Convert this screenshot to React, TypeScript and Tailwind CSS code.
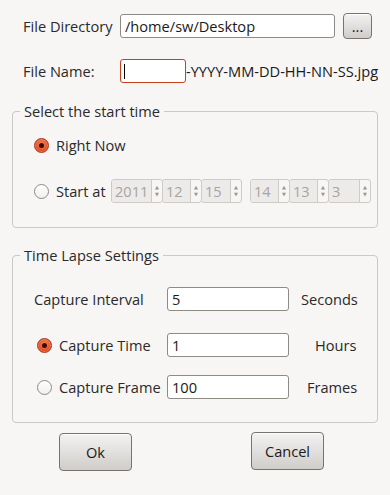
import React from 'react';

const FONT = { fontFamily: '"Open Sans", "Noto Sans", "DejaVu Sans", sans-serif' };

function Radio({ checked }: { checked?: boolean }) {
  if (checked) {
    return (
      <span className="flex h-[15px] w-[15px] shrink-0 items-center justify-center rounded-full border border-[#a5331a] bg-[radial-gradient(circle_at_50%_40%,#f58a5c,#e2461a_70%)] shadow-[inset_0_0_0_1px_rgba(255,255,255,0.25)]">
        <span className="h-[5px] w-[5px] rounded-full bg-[#3a0c02]" />
      </span>
    );
  }
  return (
    <span className="h-[15px] w-[15px] shrink-0 rounded-full border border-[#8e8a86] bg-gradient-to-b from-white to-[#f1efed]" />
  );
}

function Spin({ value, w }: { value: string; w: string }) {
  return (
    <div className={`flex h-[24px] ${w} rounded-[3px] border border-[#cfcbc7] bg-[#f7f6f5]`}>
      <div className="flex flex-1 items-center rounded-l-[3px] border-r border-[#cfcbc7] bg-[#edebe9] pl-[3px] text-[#a8a4a0]">
        {value}
      </div>
      <div className="flex w-[10px] flex-col items-center justify-center text-[5px] leading-[7px] text-[#9b9793]">
        <span>▲</span>
        <span>▼</span>
      </div>
    </div>
  );
}

function TextBox({ value, w, red }: { value?: string; w: string; red?: boolean }) {
  return (
    <div
      className={`flex h-[24px] ${w} items-center rounded-[3px] border bg-white pl-[4px] text-[#1a1a1a] ${
        red ? 'border-[#c8401e]' : 'border-[#8e8a86]'
      }`}
    >
      {value}
      {red && <span className="ml-[-1px] h-[15px] w-px bg-black" />}
    </div>
  );
}

function GrayButton({ label, w, h }: { label: string; w: string; h: string }) {
  return (
    <button
      className={`flex ${w} ${h} items-center justify-center rounded-[4px] border border-[#77736f] bg-gradient-to-b from-[#f3f2f1] via-[#e2e0de] to-[#cfccc9] text-[#1a1a1a] shadow-[inset_0_1px_0_rgba(255,255,255,0.8)]`}
    >
      {label}
    </button>
  );
}

export default function App() {
  return (
    <div
      className="h-[495px] w-[390px] overflow-hidden bg-[#f7f6f5] text-[14.6px] leading-[20px] text-[#2a2a2a]"
      style={FONT}
    >
      <div className="flex items-center pl-[23px] pt-[13px]">
        <span className="w-[97px]">File Directory</span>
        <div className="flex h-[24px] w-[215px] items-center rounded-[3px] border border-[#8e8a86] bg-white pl-[4px] text-[#1a1a1a]">
          /home/sw/Desktop
        </div>
        <div className="ml-[8px]">
          <GrayButton label="..." w="w-[29px]" h="h-[26px]" />
        </div>
      </div>

      <div className="mt-[20px] flex items-center pl-[23px]">
        <span className="w-[97px]">File Name:</span>
        <TextBox w="w-[66px]" red />
        <span className="text-[#1a1a1a]">-YYYY-MM-DD-HH-NN-SS.jpg</span>
      </div>

      <fieldset className="mx-[12px] mt-[18px] rounded-[4px] border border-[#ccc8c4] pb-[24px] pt-[14px]">
        <legend className="ml-[7px] px-[4px]">Select the start time</legend>
        <div className="flex h-[20px] items-center gap-[7px] pl-[21px]">
          <Radio checked />
          <span>Right Now</span>
        </div>
        <div className="mt-[24px] flex items-center pl-[21px]">
          <div className="flex items-center gap-[7px]">
            <Radio />
            <span className="w-[55px]">Start at</span>
          </div>
          <Spin value="2011" w="w-[52px]" />
          <Spin value="12" w="w-[40px] -ml-px" />
          <Spin value="15" w="w-[41px] -ml-px" />
          <Spin value="14" w="w-[40px] ml-[8px]" />
          <Spin value="13" w="w-[40px] -ml-px" />
          <Spin value="3" w="w-[43px] -ml-px" />
        </div>
      </fieldset>

      <fieldset className="mx-[12px] mt-[17px] rounded-[4px] border border-[#ccc8c4] pb-[23px] pt-[22px]">
        <legend className="ml-[7px] px-[4px]">Time Lapse Settings</legend>
        <div className="flex h-[24px] items-center">
          <span className="w-[154px] pl-[21px]">Capture Interval</span>
          <TextBox value="5" w="w-[122px]" />
          <span className="ml-[12px]">Seconds</span>
        </div>
        <div className="mt-[22px] flex h-[24px] items-center">
          <div className="flex w-[154px] items-center gap-[7px] pl-[24px]">
            <Radio checked />
            <span>Capture Time</span>
          </div>
          <TextBox value="1" w="w-[122px]" />
          <span className="ml-[26px]">Hours</span>
        </div>
        <div className="mt-[18px] flex h-[24px] items-center">
          <div className="flex w-[154px] items-center gap-[7px] pl-[24px]">
            <Radio />
            <span>Capture Frame</span>
          </div>
          <TextBox value="100" w="w-[122px]" />
          <span className="ml-[18px]">Frames</span>
        </div>
      </fieldset>

      <div className="mt-[10px] flex items-start">
        <div className="ml-[59px]">
          <GrayButton label="Ok" w="w-[73px]" h="h-[38px]" />
        </div>
        <div className="-mt-px ml-[119px]">
          <GrayButton label="Cancel" w="w-[73px]" h="h-[38px]" />
        </div>
      </div>
    </div>
  );
}
